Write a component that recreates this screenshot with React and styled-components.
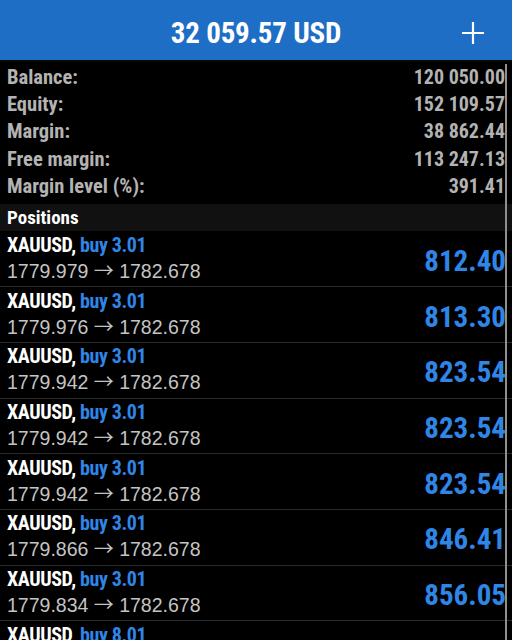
import React from "react";
import styled, { createGlobalStyle } from "styled-components";

const Global = createGlobalStyle`
  html, body { margin: 0; padding: 0; background: #000; }
  body { width: 512px; height: 640px; overflow: hidden; }
  * { box-sizing: border-box; }
`;

const COND = `"Roboto Condensed", Roboto, "Liberation Sans", sans-serif`;
const REG = `"Liberation Sans", Arial, sans-serif`;
const BLUE = "#2f86e6";

const Screen = styled.div`
  position: relative;
  width: 512px;
  height: 640px;
  overflow: hidden;
  background: #000;
  display: flex;
  flex-direction: column;
  & > * { flex: none; }
`;

const Header = styled.header`
  height: 60px;
  background: #1f6ec5;
  display: grid;
  grid-template-columns: 60px 1fr 60px;
  align-items: center;
  border-bottom: 2px solid #05080d;
  box-sizing: content-box;
`;

const Title = styled.h1`
  grid-column: 2;
  margin: 0;
  text-align: center;
  color: #fff;
  font-family: ${COND};
  font-weight: 700;
  font-size: 29px;
  letter-spacing: -0.2px;
  padding-top: 6px;
`;

const PlusButton = styled.button`
  grid-column: 3;
  justify-self: end;
  margin-right: 27px;
  width: 24px;
  height: 24px;
  padding: 0;
  border: 0;
  background: transparent;
  display: flex;
  align-items: center;
  justify-content: center;
  margin-top: 5px;
`;

const Summary = styled.section`
  display: flex;
  flex-direction: column;
  padding: 1px 7px 5px 7px;
`;

const SummaryRow = styled.div`
  height: 27.3px;
  display: flex;
  justify-content: space-between;
  align-items: center;
  font-family: ${COND};
  font-weight: 700;
  font-size: 20.5px;
  color: #b3b3b3;
`;

const Value = styled.span`
  font-size: 20px;
`;

const SectionHeader = styled.div`
  height: 27px;
  background: #111;
  display: flex;
  align-items: center;
  padding: 0 7px;
  font-family: ${COND};
  font-weight: 700;
  font-size: 19px;
  color: #fff;
`;

const List = styled.div`
  display: flex;
  flex-direction: column;
`;

const PositionRow = styled.div`
  flex: none;
  height: 55.7px;
  display: flex;
  align-items: center;
  justify-content: space-between;
  padding: 0 7px 0 7px;
  border-bottom: 1px solid #2a2a2a;
`;

const Info = styled.div`
  display: flex;
  flex-direction: column;
  gap: 3px;
  margin-top: -2px;
`;

const SymbolLine = styled.div`
  font-family: ${COND};
  font-weight: 700;
  font-size: 20px;
  color: #fff;
  line-height: 22px;
  letter-spacing: -0.4px;
`;

const Side = styled.span`
  color: ${BLUE};
`;

const PriceLine = styled.div`
  font-family: ${REG};
  font-size: 19.5px;
  color: #c4c4c4;
  line-height: 22px;
  white-space: pre;
`;

const Arrow = styled.span`
  font-family: "Noto Sans CJK SC", sans-serif;
  font-size: 20px;
  font-weight: 400;
  line-height: 22px;
`;

const Profit = styled.div`
  font-family: ${COND};
  font-weight: 700;
  font-size: 29px;
  color: ${BLUE};
  margin-top: 4px;
  margin-right: -1px;
`;

const ScrollBar = styled.div`
  position: absolute;
  right: 5px;
  top: 64px;
  bottom: 0;
  width: 2px;
  background: #8f8f8f;
`;

const summary = [
  ["Balance:", "120 050.00"],
  ["Equity:", "152 109.57"],
  ["Margin:", "38 862.44"],
  ["Free margin:", "113 247.13"],
  ["Margin level (%):", "391.41"],
];

const positions = [
  ["3.01", "1779.979", "812.40"],
  ["3.01", "1779.976", "813.30"],
  ["3.01", "1779.942", "823.54"],
  ["3.01", "1779.942", "823.54"],
  ["3.01", "1779.942", "823.54"],
  ["3.01", "1779.866", "846.41"],
  ["3.01", "1779.834", "856.05"],
  ["8.01", "1779.833", "2 233.49"],
];

export default function App() {
  return (
    <>
      <Global />
      <Screen>
        <Header>
          <Title>32 059.57 USD</Title>
          <PlusButton aria-label="Add">
            <svg width="24" height="24" viewBox="0 0 24 24">
              <path d="M12 1v22M1 12h22" stroke="#fff" strokeWidth="2.2" />
            </svg>
          </PlusButton>
        </Header>
        <Summary>
          {summary.map(([k, v]) => (
            <SummaryRow key={k}>
              <span>{k}</span>
              <Value>{v}</Value>
            </SummaryRow>
          ))}
        </Summary>
        <SectionHeader>Positions</SectionHeader>
        <List>
          {positions.map(([lot, open, profit], i) => (
            <PositionRow key={i}>
              <Info>
                <SymbolLine>
                  XAUUSD, <Side>buy {lot}</Side>
                </SymbolLine>
                <PriceLine>
                  {open + " "}
                  <Arrow>→</Arrow>
                  {" 1782.678"}
                </PriceLine>
              </Info>
              <Profit>{profit}</Profit>
            </PositionRow>
          ))}
        </List>
        <ScrollBar />
      </Screen>
    </>
  );
}
